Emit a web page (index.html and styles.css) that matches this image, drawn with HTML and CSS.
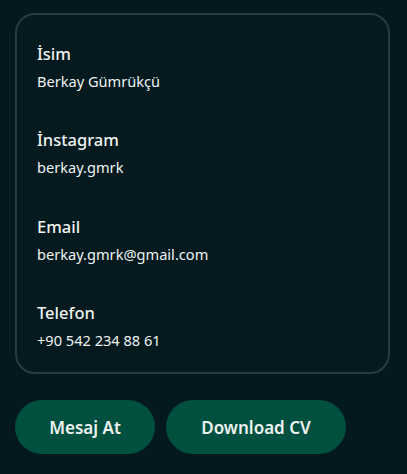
FILE: index.html
```html
<!DOCTYPE html>
<html lang="tr">
<head>
<meta charset="utf-8">
<link rel="stylesheet" href="styles.css">
</head>
<body>
<div class="page">
  <div class="card">
    <div class="item">
      <div class="label">İsim</div>
      <div class="value">Berkay Gümrükçü</div>
    </div>
    <div class="item">
      <div class="label">İnstagram</div>
      <div class="value">berkay.gmrk</div>
    </div>
    <div class="item">
      <div class="label">Email</div>
      <div class="value">berkay.gmrk@gmail.com</div>
    </div>
    <div class="item">
      <div class="label">Telefon</div>
      <div class="value">+90 542 234 88 61</div>
    </div>
  </div>
  <div class="actions">
    <a class="btn btn-message">Mesaj At</a>
    <a class="btn btn-cv">Download CV</a>
  </div>
</div>
</body>
</html>
```
FILE: styles.css
```css
html, body {
  margin: 0;
  padding: 0;
  background: #03191d;
  height: 100%;
}
body {
  font-family: "Noto Sans", "DejaVu Sans", sans-serif;
  color: #eef3f1;
}
.page {
  padding: 13px 17px 0 15px;
}
.card {
  box-sizing: border-box;
  width: 375px;
  height: 361px;
  border: 2px solid #2a3b3f;
  border-radius: 20px;
  background: #051a1f;
  padding: 27px 20px 0 20px;
  display: flex;
  flex-direction: column;
  gap: 36.3px;
}
.item {
  display: flex;
  flex-direction: column;
  gap: 4px;
}
.label {
  font-size: 16.5px;
  line-height: 24px;
  font-weight: 500;
}
.value {
  font-size: 14.6px;
  line-height: 22px;
}
.actions {
  display: flex;
  gap: 11px;
  margin-top: 26px;
}
.btn {
  box-sizing: border-box;
  height: 54px;
  border-radius: 27px;
  background: #00503f;
  color: #eef3f1;
  font-size: 17px;
  font-weight: 600;
  display: flex;
  align-items: center;
  justify-content: center;
}
.btn-message {
  width: 140px;
}
.btn-cv {
  width: 180px;
}
```
